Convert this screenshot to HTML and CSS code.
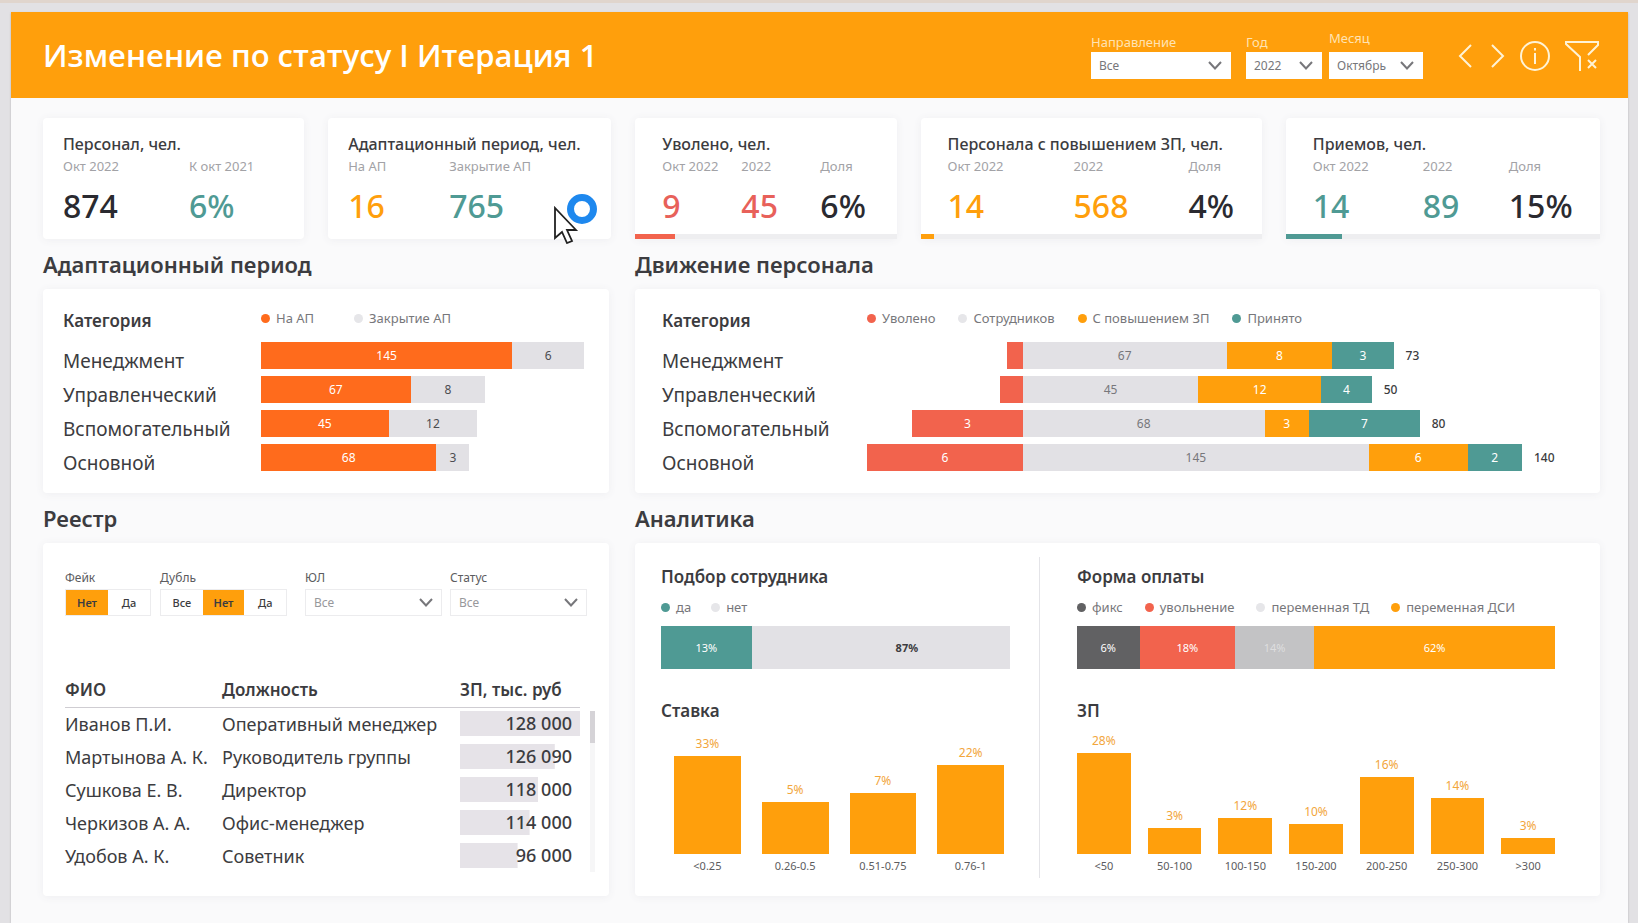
FILE: index.html
```html
<!DOCTYPE html>
<html lang="ru">
<head>
<meta charset="utf-8">
<title>Изменение по статусу</title>
<link rel="stylesheet" href="styles.css">
</head>
<body>
<div class="report">
  <header class="header">
    <h1 class="header-title">Изменение по статусу I Итерация 1</h1>
    <form class="header-filters">
      <div class="field field-wide">
        <label for="direction">Направление</label>
        <div class="picker"><select id="direction"><option>Все</option></select><svg class="chevron" viewBox="0 0 14 9"><path d="M1 1l6 6.500 6-6.500"/></svg></div>
      </div>
      <div class="field field-year">
        <label for="year">Год</label>
        <div class="picker"><select id="year"><option>2022</option></select><svg class="chevron" viewBox="0 0 14 9"><path d="M1 1l6 6.500 6-6.500"/></svg></div>
      </div>
      <div class="field field-month">
        <label for="month">Месяц</label>
        <div class="picker"><select id="month"><option>Октябрь</option></select><svg class="chevron" viewBox="0 0 14 9"><path d="M1 1l6 6.500 6-6.500"/></svg></div>
      </div>
    </form>
    <nav class="header-actions">
      <button type="button" aria-label="Назад"><svg width="16" height="28" viewBox="0 0 16 28"><path d="M14 3L3 14l11 11"/></svg></button>
      <button type="button" aria-label="Вперёд"><svg width="20" height="28" viewBox="0 0 20 28"><path d="M6 3l11 11L6 25"/></svg></button>
      <button type="button" aria-label="Информация"><svg width="32" height="32" viewBox="0 0 32 32"><circle cx="16" cy="16" r="14"/><path d="M16 13v11M16 8v2.500"/></svg></button>
      <button type="button" aria-label="Сбросить фильтры"><svg width="36" height="32" viewBox="0 0 36 32"><path d="M16 31V17L2 4V2h32v3L24 15"/><path d="M24 20l8 8M32 20l-8 8"/></svg></button>
    </nav>
  </header>

  <main class="content">
    <section class="kpis">
      <article class="card kpi kpi-left">
        <h2>Персонал, чел.</h2>
        <dl class="kpi-values cols-staff">
          <div><dt>Окт 2022</dt><dd class="dark">874</dd></div>
          <div><dt>К окт 2021</dt><dd class="teal">6%</dd></div>
        </dl>
      </article>
      <article class="card kpi kpi-left">
        <h2>Адаптационный период, чел.</h2>
        <dl class="kpi-values cols-adapt">
          <div><dt>На АП</dt><dd class="orange">16</dd></div>
          <div><dt>Закрытие АП</dt><dd class="teal">765</dd></div>
        </dl>
        <svg class="cursor" width="46" height="50" viewBox="0 0 46 50"><circle cx="29" cy="15" r="11.500" fill="#fff" stroke="#1e88ee" stroke-width="7"/><path d="M2 14v30l7-6 5 11 5-2-5-11h9z" fill="#fff" stroke="#222" stroke-width="1.800"/></svg>
      </article>
      <article class="card kpi">
        <h2>Уволено, чел.</h2>
        <dl class="kpi-values cols-fired">
          <div><dt>Окт 2022</dt><dd class="red">9</dd></div>
          <div><dt>2022</dt><dd class="red">45</dd></div>
          <div><dt>Доля</dt><dd class="dark">6%</dd></div>
        </dl>
        <div class="progress"><div class="bg-red" style="width:15%"></div></div>
      </article>
      <article class="card kpi">
        <h2>Персонала с повышением ЗП, чел.</h2>
        <dl class="kpi-values cols-raise">
          <div><dt>Окт 2022</dt><dd class="orange">14</dd></div>
          <div><dt>2022</dt><dd class="orange">568</dd></div>
          <div><dt>Доля</dt><dd class="dark">4%</dd></div>
        </dl>
        <div class="progress"><div class="bg-orange" style="width:4%"></div></div>
      </article>
      <article class="card kpi">
        <h2>Приемов, чел.</h2>
        <dl class="kpi-values cols-hired">
          <div><dt>Окт 2022</dt><dd class="teal">14</dd></div>
          <div><dt>2022</dt><dd class="teal">89</dd></div>
          <div><dt>Доля</dt><dd class="dark">15%</dd></div>
        </dl>
        <div class="progress"><div class="bg-teal" style="width:18%"></div></div>
      </article>
    </section>

    <div class="sections">
      <section class="section">
        <h2 class="section-title">Адаптационный период</h2>
        <div class="card chart chart-adapt">
          <div class="chart-head">
            <h3>Категория</h3>
            <ul class="legend legend-adapt">
              <li class="key-flame">На АП</li><li class="key-grey">Закрытие АП</li>
            </ul>
          </div>
          <div class="chart-row"><span class="cat">Менеджмент</span><div class="bars"><span class="bg-flame" style="width:77.8%">145</span><span class="bg-grey" style="width:22.2%">6</span></div></div>
          <div class="chart-row"><span class="cat">Управленческий</span><div class="bars"><span class="bg-flame" style="width:46.3%">67</span><span class="bg-grey" style="width:23.1%">8</span></div></div>
          <div class="chart-row"><span class="cat">Вспомогательный</span><div class="bars"><span class="bg-flame" style="width:39.5%">45</span><span class="bg-grey" style="width:27.5%">12</span></div></div>
          <div class="chart-row"><span class="cat">Основной</span><div class="bars"><span class="bg-flame" style="width:54.3%">68</span><span class="bg-grey" style="width:10.2%">3</span></div></div>
        </div>
      </section>

      <section class="section">
        <h2 class="section-title">Движение персонала</h2>
        <div class="card chart chart-flow">
          <div class="chart-head">
            <h3>Категория</h3>
            <ul class="legend legend-flow">
              <li class="key-red">Уволено</li><li class="key-grey">Сотрудников</li><li class="key-orange">С повышением ЗП</li><li class="key-teal">Принято</li>
            </ul>
          </div>
          <div class="chart-row"><span class="cat">Менеджмент</span><div class="bars"><span style="width:19.9%"></span><span class="bg-red" style="width:2.2%"></span><span class="bg-grey light" style="width:28.9%">67</span><span class="bg-orange" style="width:15%">8</span><span class="bg-teal" style="width:8.7%">3</span><b>73</b></div></div>
          <div class="chart-row"><span class="cat">Управленческий</span><div class="bars"><span style="width:18.9%"></span><span class="bg-red" style="width:3.2%"></span><span class="bg-grey light" style="width:24.9%">45</span><span class="bg-orange" style="width:17.4%">12</span><span class="bg-teal" style="width:7.2%">4</span><b>50</b></div></div>
          <div class="chart-row"><span class="cat">Вспомогательный</span><div class="bars"><span style="width:6.4%"></span><span class="bg-red" style="width:15.7%">3</span><span class="bg-grey light" style="width:34.3%">68</span><span class="bg-orange" style="width:6.3%">3</span><span class="bg-teal" style="width:15.7%">7</span><b>80</b></div></div>
          <div class="chart-row"><span class="cat">Основной</span><div class="bars"><span class="bg-red" style="width:22.1%">6</span><span class="bg-grey light" style="width:49.1%">145</span><span class="bg-orange" style="width:14%">6</span><span class="bg-teal" style="width:7.7%">2</span><b>140</b></div></div>
        </div>
      </section>

      <section class="section">
        <h2 class="section-title">Реестр</h2>
        <div class="card registry">
          <div class="registry-filters">
            <div class="filter filter-two"><span class="filter-label" id="fake">Фейк</span>
              <div class="toggle" role="group" aria-labelledby="fake"><button type="button" class="on">Нет</button><button type="button">Да</button></div></div>
            <div class="filter filter-three"><span class="filter-label" id="double">Дубль</span>
              <div class="toggle" role="group" aria-labelledby="double"><button type="button">Все</button><button type="button" class="on">Нет</button><button type="button">Да</button></div></div>
            <div class="filter filter-pick"><label class="filter-label" for="entity">ЮЛ</label>
              <div class="picker outlined"><select id="entity"><option>Все</option></select><svg class="chevron" viewBox="0 0 14 9"><path d="M1 1l6 6.500 6-6.500"/></svg></div></div>
            <div class="filter filter-pick"><label class="filter-label" for="status">Статус</label>
              <div class="picker outlined"><select id="status"><option>Все</option></select><svg class="chevron" viewBox="0 0 14 9"><path d="M1 1l6 6.500 6-6.500"/></svg></div></div>
          </div>
          <div class="registry-body">
            <table class="people">
              <thead><tr><th class="col-name">ФИО</th><th class="col-job">Должность</th><th class="col-pay">ЗП, тыс. руб</th></tr></thead>
              <tbody>
                <tr><td>Иванов П.И.</td><td>Оперативный менеджер</td><td><div class="pay" style="background-size:100% 100%">128 000</div></td></tr>
                <tr><td>Мартынова А. К.</td><td>Руководитель группы</td><td><div class="pay" style="background-size:79% 100%">126 090</div></td></tr>
                <tr><td>Сушкова Е. В.</td><td>Директор</td><td><div class="pay" style="background-size:65% 100%">118 000</div></td></tr>
                <tr><td>Черкизов А. А.</td><td>Офис-менеджер</td><td><div class="pay" style="background-size:58% 100%">114 000</div></td></tr>
                <tr><td>Удобов А. К.</td><td>Советник</td><td><div class="pay" style="background-size:48% 100%">96 000</div></td></tr>
              </tbody>
            </table>
            <div class="scroll"><div class="scroll-thumb"></div></div>
          </div>
        </div>
      </section>

      <section class="section">
        <h2 class="section-title">Аналитика</h2>
        <div class="card analytics">
          <div class="panel panel-hiring">
            <h3>Подбор сотрудника</h3>
            <ul class="legend legend-hiring"><li class="key-teal">да</li><li class="key-grey">нет</li></ul>
            <div class="share"><span class="bg-teal" style="width:26%">13%</span><span class="bg-grey share-rest" style="width:74%"><b>87%</b></span></div>
            <h3>Ставка</h3>
            <div class="columns columns-rate">
              <div><span>33%</span><i style="height:98px"></i></div>
              <div><span>5%</span><i style="height:52px"></i></div>
              <div><span>7%</span><i style="height:61px"></i></div>
              <div><span>22%</span><i style="height:89px"></i></div>
            </div>
            <div class="axis columns-rate"><span>&lt;0.25</span><span>0.26-0.5</span><span>0.51-0.75</span><span>0.76-1</span></div>
          </div>
          <div class="panel panel-pay">
            <h3>Форма оплаты</h3>
            <ul class="legend legend-pay"><li class="key-dark">фикс</li><li class="key-red">увольнение</li><li class="key-grey">переменная ТД</li><li class="key-orange">переменная ДСИ</li></ul>
            <div class="share"><span class="bg-dark" style="width:13.1%">6%</span><span class="bg-red" style="width:20%">18%</span><span class="bg-silver" style="width:16.5%">14%</span><span class="bg-orange" style="width:50.4%">62%</span></div>
            <h3>ЗП</h3>
            <div class="columns columns-pay">
              <div><span>28%</span><i style="height:101px"></i></div>
              <div><span>3%</span><i style="height:26px"></i></div>
              <div><span>12%</span><i style="height:36px"></i></div>
              <div><span>10%</span><i style="height:30px"></i></div>
              <div><span>16%</span><i style="height:77px"></i></div>
              <div><span>14%</span><i style="height:56px"></i></div>
              <div><span>3%</span><i style="height:16px"></i></div>
            </div>
            <div class="axis columns-pay"><span>&lt;50</span><span>50-100</span><span>100-150</span><span>150-200</span><span>200-250</span><span>250-300</span><span>&gt;300</span></div>
          </div>
        </div>
      </section>
    </div>
  </main>
</div>
</body>
</html>
```
FILE: styles.css
```css
:root {
  --orange: #ff9f0c;
  --flame: #ff6b1c;
  --red: #f2634d;
  --teal: #4f9a94;
  --grey: #e2e1e5;
  --ink: #3c3c40;
}
* { box-sizing: border-box; margin: 0; padding: 0; }
body {
  background: #e2e1e4;
  border-top: 3px solid #e0d5cd;
  padding: 9px 10px 3px 11px;
  color: var(--ink);
  font-family: "Noto Sans", "Open Sans", sans-serif;
  font-size: 18px;
}
button, select { font-family: inherit; color: inherit; }
ul { list-style: none; }

.report { background: #fafafb; box-shadow: 0 1px 2px #b4b4b8; }

/* header */
.header {
  display: flex;
  align-items: center;
  height: 86px;
  padding: 0 28px 0 32px;
  background: var(--orange);
  color: #fff;
}
.header-title { flex: 1; font-family: "Open Sans", sans-serif; font-size: 31px; font-weight: 600; line-height: 40px; }
.header-filters { display: flex; align-items: flex-end; padding-bottom: 8px; }
.field { display: flex; flex-direction: column; }
.field label { font-size: 13px; line-height: 20px; color: #ffe3b3; }
.field-wide { width: 140px; margin-right: 15px; }
.field-year { width: 76px; margin-right: 7px; }
.field-month { width: 94px; }
.field-month label { line-height: 28px; }
.picker { position: relative; }
.picker select {
  display: block;
  width: 100%;
  height: 27px;
  padding: 0 8px;
  border: 0;
  border-radius: 0;
  appearance: none;
  background: #fff;
  color: #77777b;
  font-size: 12px;
}
.chevron {
  position: absolute;
  top: 9px;
  right: 9px;
  width: 14px;
  height: 9px;
  fill: none;
  stroke: #77777b;
  stroke-width: 2;
  pointer-events: none;
}
.outlined select { border: 1px solid #ececee; color: #98989c; }
.header-actions { display: flex; align-items: center; gap: 13px; margin-left: 34px; padding-top: 2px; }
.header-actions button { display: flex; border: 0; background: none; }
.header-actions svg { fill: none; stroke: #fff3d6; stroke-width: 2; }

/* cards */
.content { padding: 20px 28px 27px 32px; }
.card { background: #fff; border-radius: 4px; box-shadow: 0 1px 8px #eeeef1; }
.kpis { display: grid; grid-template-columns: 261fr 283fr 261fr 341fr 314fr; gap: 24px; }
.kpi { position: relative; height: 121px; padding: 16px 0 0 27px; }
.kpi-left { padding-left: 20px; }
.kpi h2 { font-size: 16px; font-weight: 500; line-height: 20px; white-space: nowrap; }
.kpi-values { display: grid; }
.cols-staff { grid-template-columns: 126px 1fr; }
.cols-adapt { grid-template-columns: 101px 1fr; }
.cols-fired { grid-template-columns: 79px 79px 1fr; }
.cols-raise { grid-template-columns: 126px 115px 1fr; }
.cols-hired { grid-template-columns: 110px 86px 1fr; }
.kpi dt { font-size: 13px; line-height: 24px; color: #a2a2a6; white-space: nowrap; }
.kpi dd { font-size: 32px; font-weight: 500; line-height: 40px; margin-top: 8px; }
.dark { color: #2a2a30; }
.teal { color: var(--teal); }
.orange { color: var(--orange); }
.red { color: #e8615a; }
.bg-orange { background: var(--orange); }
.bg-flame { background: var(--flame); }
.bg-red { background: var(--red); }
.bg-teal { background: var(--teal); }
.bg-grey { background: var(--grey); color: #4c4c50; }
.bg-silver { background: #c3c3c5; color: #dededf; }
.bg-dark { background: #616163; }
.light { color: #77777b; }
.progress { position: absolute; left: 0; right: 0; bottom: 0; height: 5px; background: #eeeef0; }
.progress div { height: 100%; }
.cursor { position: absolute; left: 225px; top: 76px; }

.sections { display: grid; grid-template-columns: 566fr 965fr; column-gap: 26px; }
.section { display: flex; flex-direction: column; }
.section-title { font-size: 22px; font-weight: 600; line-height: 50px; }
.section > .card { flex: 1; }
h3 { font-size: 17px; font-weight: 600; line-height: 24px; }

/* legends */
.legend { display: flex; align-items: center; font-size: 13px; line-height: 18px; color: #77777b; }
.legend li { display: flex; align-items: center; gap: 6px; white-space: nowrap; }
.legend li::before { content: ""; width: 9px; height: 9px; border-radius: 50%; background: var(--key); }
.key-flame { --key: var(--flame); }
.key-grey { --key: #e6e6e9; }
.key-red { --key: var(--red); }
.key-orange { --key: var(--orange); }
.key-teal { --key: var(--teal); }
.key-dark { --key: #616163; }
.legend-adapt { gap: 40px; }
.legend-flow { gap: 23px; }
.legend-hiring { gap: 20px; }
.legend-pay { gap: 22px; }

/* stacked rows */
.chart { padding: 20px 25px 13px 20px; min-height: 204px; }
.chart-flow { padding: 20px 28px 13px 27px; }
.chart-head, .chart-row { display: grid; grid-template-columns: 198px 1fr; }
.chart-flow .chart-head, .chart-flow .chart-row { grid-template-columns: 205px 1fr; }
.chart-head { margin-bottom: 9px; }
.chart .legend { padding-bottom: 6px; }
.chart-row { height: 34px; }
.cat { font-size: 19px; line-height: 38px; }
.bars { display: flex; height: 27px; font-size: 12px; line-height: 27px; }
.bars span { color: #fff; text-align: center; }
.bars .bg-grey { color: #4c4c50; }
.bars .light { color: #77777b; }
.bars b { padding-left: 12px; font-weight: 500; }

/* registry */
.registry { padding: 24px 14px 18px 22px; }
.registry-filters { display: flex; padding-right: 8px; }
.filter { display: flex; flex-direction: column; }
.filter-label { font-size: 12px; line-height: 22px; color: #5c5c60; }
.filter-two { width: 86px; margin-right: 9px; }
.filter-three { width: 127px; margin-right: 18px; }
.filter-pick { flex: 1; }
.filter-pick + .filter-pick { margin-left: 8px; }
.toggle { display: flex; height: 27px; border: 1px solid #ececee; }
.toggle button { flex: 1; border: 0; background: #fff; font-size: 11px; font-weight: 500; }
.toggle .on { background: var(--orange); font-weight: 600; }
.registry-body { display: flex; justify-content: space-between; margin-top: 57px; }
.people { flex: 1; border-collapse: collapse; table-layout: fixed; }
.people th { height: 34px; border-bottom: 1px solid #cfcdd2; font-size: 17px; font-weight: 600; text-align: left; }
.people td { height: 33px; white-space: nowrap; }
.col-name { width: 157px; }
.col-pay { width: 120px; }
.pay {
  height: 25px;
  padding-right: 8px;
  background: linear-gradient(#e6e3e8, #e6e3e8) no-repeat;
  font-weight: 500;
  line-height: 25px;
  text-align: right;
}
.scroll { width: 5px; margin: 38px 0 0 10px; background: #f6f6f7; }
.scroll-thumb { height: 32px; background: #d5d3d7; }

/* analytics */
.analytics { display: grid; grid-template-columns: 405fr 560fr; padding: 14px 0 18px; }
.panel { padding: 8px 45px 0 37px; }
.panel-hiring { padding: 8px 29px 0 26px; border-right: 1px solid #e4e4e8; }
.panel .legend { margin: 9px 0 10px; }
.share { display: flex; height: 43px; margin-bottom: 30px; font-size: 11px; line-height: 43px; }
.share span { color: #fff; text-align: center; }
.share .bg-grey { color: #3c3c40; }
.share .share-rest { padding-left: 52px; }
.share .bg-silver { color: #dededf; }
.columns, .axis { display: grid; grid-auto-flow: column; grid-auto-columns: 1fr; }
.columns { height: 131px; align-items: end; }
.columns div { display: flex; flex-direction: column; align-items: stretch; text-align: center; }
.columns span { font-size: 12px; line-height: 24px; color: #f2a63c; }
.columns i { background: var(--orange); }
.axis { font-size: 11px; line-height: 24px; text-align: center; color: #5c5c60; white-space: nowrap; }
.columns-rate { column-gap: 21px; padding: 0 6px 0 13px; }
.columns-pay { column-gap: 17px; }
```
